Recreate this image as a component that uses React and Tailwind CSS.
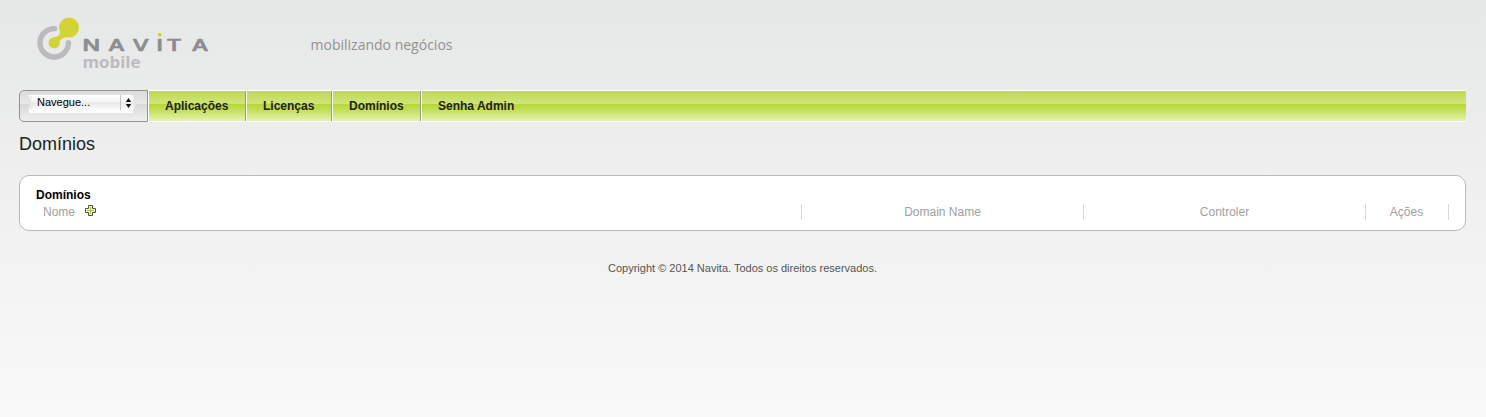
function Logo() {
  return (
    <svg width="180" height="56" viewBox="34 16 180 56" className="block shrink-0" role="img" aria-label="Navita mobile">
      <path d="M54.6 28.6 A14.2 14.2 0 1 0 68.4 42.6" fill="none" stroke="#bcbabe" strokeWidth="5.4" strokeLinecap="round" />
      <path d="M59.6 29.5 C61.5 35 57.5 37.2 53.5 37.2 L58.6 44.5 C59.5 39.5 62.5 37 70 37 Z" fill="#d3d336" />
      <circle cx="69" cy="27.6" r="10" fill="#d3d336" />
      <circle cx="54.2" cy="42.8" r="5.6" fill="#d3d336" />
      <g transform="scale(1.5 1)">
        <text y="51.5" fontFamily="Inter, sans-serif" fontSize="15.5" fontWeight="500" fill="#8e8d91" stroke="#8e8d91" strokeWidth=".7" strokeLinejoin="round" x="55 72.2 88.4 104.4 111 127.8">NAVITA</text>
      </g>
      <circle cx="159.7" cy="34.8" r="2" fill="#d3d336" />
      <text x="82.5" y="68" textLength="58" lengthAdjust="spacingAndGlyphs" fontFamily="Open Sans, sans-serif" fontSize="16.5" fontWeight="700" fill="#bcbabe">mobile</text>
    </svg>
  );
}

function NavItem({ label, className }) {
  return (
    <a className={`flex h-[30px] items-center border-x border-l-white border-r-[#969c89] pl-4 text-[12px] font-bold text-[#222] ${className}`}>
      {label}
    </a>
  );
}

function NavSelect() {
  return (
    <div className="h-8 w-[129px] rounded-l-[5px] border border-[#929292] bg-[linear-gradient(#dcdcdc_0%,#e9e9e9_43%,#d9d9d9_44%,#efefef_100%)] pl-[9px] pt-1">
      <button className="flex h-[18px] w-[104px] items-start bg-white">
        <span className="flex h-4 w-[107px] shrink-0 items-start rounded-[5px] border-x-2 border-[#e4e4e4] bg-[linear-gradient(#ffffff_0%,#f3f3f3_45%,#e8e8e8_50%,#ffffff_100%)] pl-[6px]">
          <span className="-mt-px w-[83px] text-left text-[11px] leading-4 text-black">Navegue...</span>
          <span className="h-[15px] w-px bg-[#c4c4c4]" />
          <svg width="7" height="10" viewBox="0 0 7 10" className="ml-1 mt-[3px]">
            <path d="M3.5 0 L6.2 4 H.8 Z M3.5 10 L6.2 6 H.8 Z" fill="#111" />
          </svg>
        </span>
      </button>
    </div>
  );
}

function AddIcon() {
  return (
    <svg width="11" height="11" viewBox="0 0 11 11" className="ml-[10px] mt-px">
      <path d="M3.5 .5 H7.5 V3.5 H10.5 V7.5 H7.5 V10.5 H3.5 V7.5 H.5 V3.5 H3.5 Z" fill="#eef3c4" stroke="#505548" />
      <path d="M5.5 2 V9 M2 5.5 H9" stroke="#b1cf38" strokeWidth="1.2" />
    </svg>
  );
}

export default function App() {
  return (
    <div className="flex h-[417px] flex-col bg-[linear-gradient(#e6e8e7,#f9f9f9)] pl-[19px] pr-5 font-['Liberation_Sans',Arial,sans-serif]">
      <header className="flex h-[90px] pl-[15px] pt-4">
        <Logo />
        <svg width="150" height="26" className="ml-[95px] mt-4 block" role="img" aria-label="mobilizando negócios">
          <text x="1.5" y="18" textLength="142" lengthAdjust="spacingAndGlyphs" fontFamily="Open Sans, sans-serif" fontSize="14.5" fontWeight="400" fill="#929292">mobilizando negócios</text>
        </svg>
      </header>
      <nav className="flex h-8">
        <NavSelect />
        <div className="flex flex-1 border-y border-white bg-[linear-gradient(#bfd94f_0%,#cfe57c_42%,#b7d738_44%,#c2dd56_62%,#e7f3b2_100%)]">
          <NavItem label="Aplicações" className="w-[98px]" />
          <NavItem label="Licenças" className="w-[86px]" />
          <NavItem label="Domínios" className="w-[89px]" />
          <a className="flex h-[30px] items-center border-l border-white pl-4 text-[12px] font-bold text-[#222]">Senha Admin</a>
        </div>
      </nav>
      <h1 className="mt-[10px] h-[43px] text-[18px] leading-6 text-[#222]">Domínios</h1>
      <section className="h-14 rounded-[10px] border border-[#b9b9b9] bg-white px-4 pt-3">
        <h2 className="h-4 text-[12px] font-bold leading-[15px] text-black">Domínios</h2>
        <div className="flex h-4 text-[12px] leading-4 text-[#a0a0a0]">
          <div className="flex w-[766px] shrink-0 items-start border-r border-[#d8d8d8] pl-[7px]">
            Nome<AddIcon />
          </div>
          <div className="w-[282px] shrink-0 border-r border-[#d8d8d8] text-center">Domain Name</div>
          <div className="w-[282px] shrink-0 border-r border-[#d8d8d8] text-center">Controler</div>
          <div className="w-[83px] shrink-0 border-r border-[#d8d8d8] pr-px text-center">Ações</div>
        </div>
      </section>
      <footer className="mt-[29px] text-center text-[11px] leading-4 text-[#555]">
        Copyright © 2014 Navita. Todos os direitos reservados.
      </footer>
    </div>
  );
}
